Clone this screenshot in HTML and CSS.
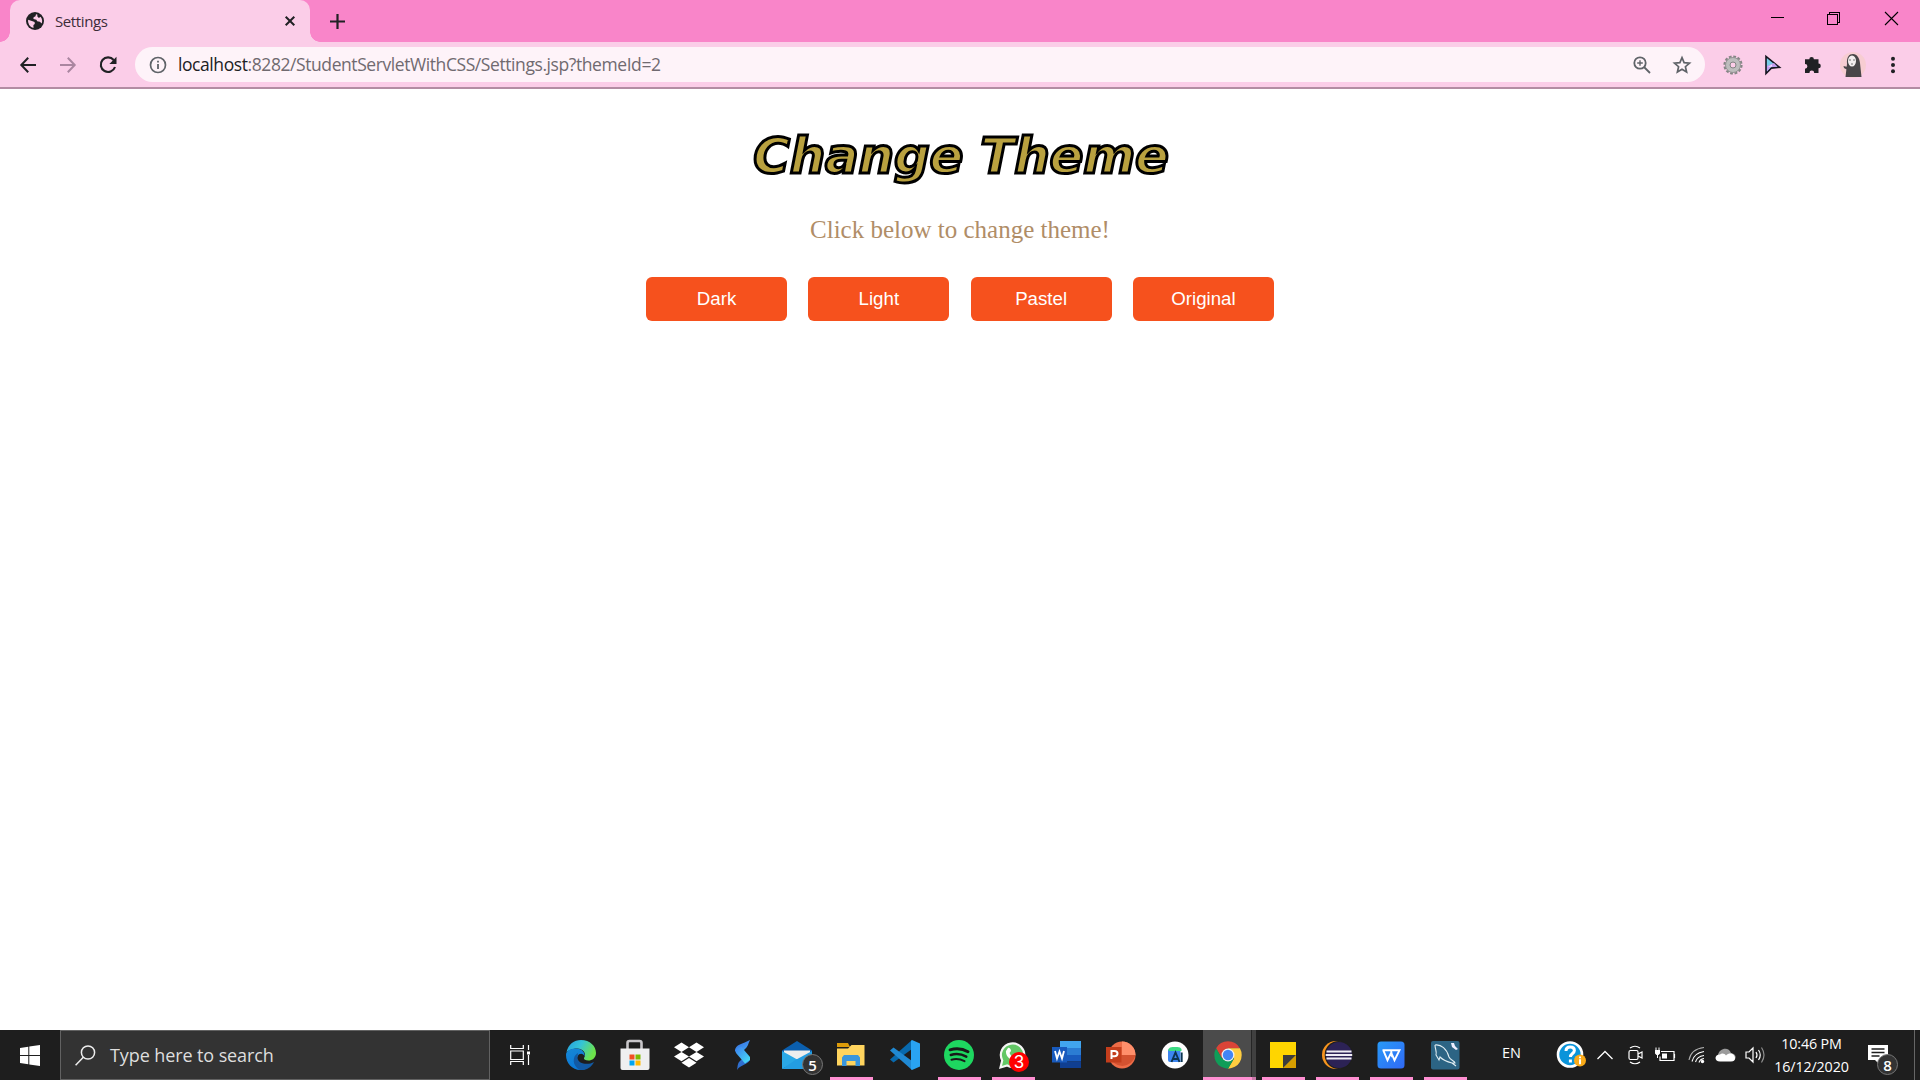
FILE: index.html
```html
<!DOCTYPE html>
<html lang="en">
<head>
<meta charset="utf-8">
<title>Settings</title>
<link rel="stylesheet" href="styles.css">
</head>
<body>
<div class="screen">
  <header class="tabstrip">
    <div class="tab">
      <svg class="favicon" width="18" height="18" viewBox="0 0 18 18"><circle cx="9" cy="9" r="9" fill="#202124"/><path d="M10 2.200 9.500 4.300 7.600 5.200 7.400 7.100 10.400 7.800 11.200 9.300 13.800 9.800 15.700 11.600A7.100 7.100 0 0 0 14.500 4.700L12.900 5.900 11.400 4.600 11.300 2.400ZM2.100 7.700 5.900 9.100 8.600 10.100 8.800 12.100 7.400 13 7.500 15.900A7.100 7.100 0 0 1 2.100 7.700Z" fill="#fbcde8"/></svg>
      <span class="tab-title">Settings</span>
      <svg class="tab-close" width="10" height="10" viewBox="0 0 10 10"><path d="M.7.7l8.600 8.600M9.300.7L.7 9.300" stroke="#202124" stroke-width="2"/></svg>
    </div>
    <svg class="new-tab" width="15" height="15" viewBox="0 0 15 15"><path d="M7.500 0v15M0 7.500h15" stroke="#202124" stroke-width="2.200"/></svg>
    <div class="window-controls">
      <svg width="13" height="13" viewBox="0 0 13 13" shape-rendering="crispEdges"><path d="M0 5.500h13" stroke="#000"/></svg>
      <svg width="13" height="13" viewBox="0 0 13 13" shape-rendering="crispEdges"><path d="M.5 2.500h10v10H.5zM2.500 2.500V.5h10v10h-2" fill="none" stroke="#000"/></svg>
      <svg width="13" height="13" viewBox="0 0 13 13"><path d="M0 0l13 13M13 0L0 13" stroke="#000" stroke-width="1.100"/></svg>
    </div>
  </header>

  <div class="toolbar">
    <div class="nav">
      <svg width="16" height="16" viewBox="0 0 16 16"><path d="M16 8H1.500M8.200.8 1.300 8l6.900 7.200" fill="none" stroke="#202124" stroke-width="2"/></svg>
      <svg width="16" height="16" viewBox="0 0 16 16"><path d="M0 8h14.500M7.800.8 14.700 8l-6.900 7.200" fill="none" stroke="#aa86a0" stroke-width="2"/></svg>
      <svg width="18" height="18" viewBox="0 0 18 18"><path d="M14.700 4A7.300 7.300 0 1 0 16 11" fill="none" stroke="#202124" stroke-width="2.100"/><path d="M17.500.8v7.100h-7.100z" fill="#202124"/></svg>
    </div>
    <div class="omnibox">
      <svg width="18" height="18" viewBox="0 0 18 18"><circle cx="9" cy="9" r="7.500" fill="none" stroke="#5f6368" stroke-width="1.700"/><path d="M8.100 8h1.800v5H8.100zM8.100 4.800h1.800v1.800H8.100z" fill="#5f6368"/></svg>
      <span class="url"><span class="host">localhost</span>:8282/StudentServletWithCSS/Settings.jsp?themeId=2</span>
      <svg class="zoom" width="18" height="18" viewBox="0 0 18 18"><g fill="none" stroke="#5f6368" stroke-width="1.800"><circle cx="7" cy="7" r="5.700"/><path d="M11 11l6 6"/><path d="M7 4.200v5.600M4.200 7h5.600" stroke-width="1.400"/></g></svg>
      <svg class="star" width="18" height="18" viewBox="0 0 18 18"><path d="M9 1.700l2.100 5 5.400.4-4.100 3.600 1.200 5.300L9 13.200 4.400 16l1.200-5.300L1.500 7.100l5.400-.4z" fill="none" stroke="#5f6368" stroke-width="1.700"/></svg>
    </div>
    <div class="extensions">
      <svg width="20" height="20" viewBox="0 0 20 20"><circle cx="10" cy="10" r="8.300" fill="none" stroke="#858585" stroke-width="2.600" stroke-dasharray="2.700 1.646"/><circle cx="10" cy="10" r="5.200" fill="none" stroke="#bdbdbd" stroke-width="5"/><circle cx="10" cy="10" r="7.500" fill="none" stroke="#8b8b8b" stroke-width=".8"/><circle cx="10" cy="10" r="3" fill="none" stroke="#858585"/></svg>
      <svg width="20" height="20" viewBox="0 0 20 20"><path d="M3 1.500v17l5.300-5.400 8.200-.8z" fill="#79cde9" stroke="#15151f" stroke-width="1.600"/><path d="M4 11l7-3 3.500 3.700-6.600.4L4 16.500z" fill="#c69df0"/><path d="M5 12l4-2.500v2z" fill="#f6e6ff"/></svg>
      <svg width="20" height="20" viewBox="0 0 20 20"><path d="M2 4.300H6.300A2.300 2.300 0 1 1 10.900 4.300H15.500V8.600A2.300 2.300 0 1 1 15.500 13.200V18H11.200A2.400 2.400 0 0 0 6.400 18H2V13.700A2.400 2.400 0 0 0 2 8.900z" fill="#202124"/></svg>
      <svg class="avatar" width="26" height="26" viewBox="0 0 26 26"><circle cx="13" cy="13" r="13" fill="#f7cdd2"/><path d="M5.500 25L7 12C6.500 5 9 2 13 2s6.500 4 7 9l1.500 14zM3.500 14l4 1v3l-3.500-2z" fill="#494648"/><ellipse cx="12" cy="9" rx="4" ry="5.500" fill="#f3eeee"/><path d="M10 7v2M14 7v2M11 12h2" stroke="#777"/></svg>
      <svg width="20" height="20" viewBox="0 0 20 20" fill="#202124"><circle cx="10" cy="3.800" r="2"/><circle cx="10" cy="10" r="2"/><circle cx="10" cy="16.200" r="2"/></svg>
    </div>
  </div>

  <main class="page">
    <h1>Change Theme</h1>
    <p>Click below to change theme!</p>
    <div class="themes">
      <button>Dark</button><button>Light</button><button>Pastel</button><button>Original</button>
    </div>
  </main>

  <footer class="taskbar">
    <div class="start"><svg width="20" height="21" viewBox="0 0 20 21"><path d="M0 3l8.300-1.200v8.200H0zM9.300 1.600 20 0v10H9.300zM0 11h8.300v8.200L0 18zM9.300 11H20v10L9.300 19.400z" fill="#fff"/></svg></div>
    <div class="search">
      <svg width="21" height="21" viewBox="0 0 21 21"><g fill="none" stroke="#eee" stroke-width="1.500"><circle cx="13" cy="7.500" r="6.600"/><path d="M8.300 12.300.6 20.200"/></g></svg>
      <span>Type here to search</span>
    </div>
    <div class="taskview"><svg width="21" height="20" viewBox="0 0 21 20"><path d="M.7 0v3.500h12.600V0M.7 20v-3.500h12.600V20M.7 6h12.600v8.500H.7zM18.500 0v5M18.500 10v10" fill="none" stroke="#fff" stroke-width="1.200"/><path d="M17 6.500h3v3h-3z" fill="#fff"/></svg></div>
    <div class="apps">
      <div class="app"><svg width="30" height="30" viewBox="0 0 30 30"><defs><linearGradient id="eg" x1="0" y1="0" x2="1" y2=".4"><stop offset="0" stop-color="#249dde"/><stop offset=".5" stop-color="#35c4d6"/><stop offset="1" stop-color="#6de34a"/></linearGradient><linearGradient id="eb" x1="0" y1="0" x2=".4" y2="1"><stop offset="0" stop-color="#1688d6"/><stop offset="1" stop-color="#0a78d8"/></linearGradient></defs><path d="M.5 12C2.500 4 8 0 15 0c9 0 15 6 15 13 0 5-4 7.500-7.500 7.500-3 0-5-1-4.500-2.500 3-4-.5-9.500-7-9.500C5.500 8.500 2 11 .5 12z" fill="url(#eg)"/><path d="M0 15C0 11 4 8.500 10 8.500c6 0 9.500 4.500 8.500 8-1-3-5-4-7 0C8.500 22 15 27 25 24c-3 5-7.500 6-10.500 6C6 30 0 23 0 15z" fill="url(#eb)"/><path d="M12 13C6 16 6 26 14 30c6 .5 11-2 14-8-6 3.500-16 2-16.500-4z" fill="#125aa4"/></svg></div>
      <div class="app"><svg width="30" height="30" viewBox="0 0 30 30"><path d="M7.500 9V3Q7.500 1 9.500 1h10q2 0 2 2v6" fill="none" stroke="#c8c6c9" stroke-width="2.600"/><path d="M.5 8.500h29v19.500q0 2-2 2h-25q-2 0-2-2z" fill="#efeff0"/><path d="M9.500 14.500h5v5h-5z" fill="#f25022"/><path d="M15.500 14.500h5v5h-5z" fill="#7fba00"/><path d="M9.500 20.500h5v5h-5z" fill="#00a4ef"/><path d="M15.500 20.500h5v5h-5z" fill="#ffb900"/></svg></div>
      <div class="app"><svg width="30" height="30" viewBox="0 0 30 30"><path d="M7.500 2.500l7.500 4.700-7.500 4.700L0 7.200zM22.500 2.500L30 7.200l-7.500 4.700L15 7.200zM7.500 11.900l7.500 4.700-7.500 4.700L0 16.600zM22.500 11.900l7.500 4.700-7.500 4.700-7.500-4.700zM15 18l7.500 4.700L15 27.500l-7.500-4.800z" fill="#fff"/></svg></div>
      <div class="app"><svg width="30" height="30" viewBox="0 0 30 30"><defs><linearGradient id="sg" x1="0" y1="0" x2=".6" y2="1"><stop offset="0" stop-color="#3467e0"/><stop offset="1" stop-color="#43a8f2"/></linearGradient><linearGradient id="sh" x1="0" y1="0" x2="1" y2="1"><stop offset="0" stop-color="#3b7df0"/><stop offset="1" stop-color="#48e4f6"/></linearGradient></defs><path d="M22 0C20 4 20 7 16 10L13 14 7 11C7 4 15 4 22 0z" fill="url(#sg)"/><path d="M9 30c1-4 0-7 4-10l4-3 5 3C19 25 12 25 9 30z" fill="#2f6fd0"/><path d="M7 10 13 6.500 22 17v3l-5 3.500L8 13z" fill="url(#sh)"/></svg></div>
      <div class="app"><svg width="30" height="30" viewBox="0 0 30 30"><path d="M0 10.500 15 1l15 9.500V22H0z" fill="#0b5fae"/><path d="M2 10.500h26v9H2z" fill="#eee"/><path d="M0 11l17 9.500L0 29z" fill="#2aa8e6"/><path d="M30 11v18H0l13-8.700z" fill="#239de2"/></svg><span class="badge dark">5</span></div>
      <div class="app open"><svg width="30" height="30" viewBox="0 0 30 30"><path d="M1 3h11l2 4H1z" fill="#dc9b09"/><path d="M1 8.500h11L15.500 5H28.500v20.500H1z" fill="#ffd45e"/><path d="M6 26V17.500L8 15h14l2 2.500V26h-4.500v-5h-9v5z" fill="#3a96dc"/></svg></div>
      <div class="app"><svg width="30" height="30" viewBox="0 0 30 30"><path d="M22 0v9L3.500 22.500 0 19.500z" fill="#0869ad"/><path d="M22 30v-9L3.500 7.500 0 10.500z" fill="#2089d3"/><path d="M22 0l8 3.500v23L22 30l-1-1V1z" fill="#29a3f2"/></svg></div>
      <div class="app open"><svg width="30" height="30" viewBox="0 0 30 30"><circle cx="15" cy="15" r="15" fill="#1ed760"/><g fill="none" stroke="#191919" stroke-linecap="round"><path d="M6 9.800c6-1.700 13-1 18 2" stroke-width="2.900"/><path d="M6.800 15c5-1.500 11-.8 15.500 1.700" stroke-width="2.500"/><path d="M7.500 19.700c4.500-1.200 9-.6 13 1.500" stroke-width="2"/></g></svg></div>
      <div class="app open"><svg width="30" height="30" viewBox="0 0 30 30"><path d="M2.500 27.500l1.700-7a11.700 11.700 0 1 1 5 5z" fill="#63c766" stroke="#f5f5f5" stroke-width="2.200"/><path d="M10 8c2-1 3 2 3 3l-1.500 2c1.500 3 3 4 5 5l2-2c2 1 3 2 2.500 3-3 5-14-1-13-8z" fill="#fff"/></svg><span class="badge red">3</span></div>
      <div class="app"><svg width="30" height="30" viewBox="0 0 30 30"><path d="M8 1h21v7H8z" fill="#41a5ee"/><path d="M8 8h21v7H8z" fill="#2b7cd3"/><path d="M8 15h21v6.500H8z" fill="#185abd"/><path d="M8 21.500h21V28H8z" fill="#103f91"/><path d="M0 7h15v15.500H0z" fill="#185abd"/><path d="M3 11l2 7.500 2.500-7 2.500 7 2-7.500" fill="none" stroke="#fff" stroke-width="1.800"/></svg></div>
      <div class="app"><svg width="30" height="30" viewBox="0 0 30 30"><circle cx="16" cy="15" r="13.500" fill="#ed6c47"/><path d="M16 1.500A13.500 13.500 0 0 1 29.500 15H16z" fill="#ff8f6b"/><path d="M3 15h26.500a13.500 13.500 0 0 1-26.500 0z" fill="#d35230"/><path d="M0 7h15.500v15.500H0z" fill="#c43e1c"/><path d="M5.500 19v-8h3q3 0 3 2.600t-3 2.600h-3" fill="none" stroke="#fff" stroke-width="2"/></svg></div>
      <div class="app"><svg width="30" height="30" viewBox="0 0 30 30"><circle cx="15" cy="15" r="13.500" fill="#fff"/><path d="M8 9.500h12.500V22H10q-2 0-2-2z" fill="#3d86f0"/><path d="M8.500 11V9q1-2 4-2h5q3 0 4 2v2z" fill="#3ddc84"/><path d="M11.500 22l4-9.500 4 9.500M13 19h5M21.700 12.500V22" fill="none" stroke="#0d3550" stroke-width="1.900"/></svg></div>
      <div class="app open active"><svg width="30" height="30" viewBox="0 0 30 30"><path d="M3.100 8.200A13.700 13.700 0 0 1 26.900 8.200H15L9 18.500z" fill="#db4437"/><path d="M26.900 8.200A13.700 13.700 0 0 1 15 28.700L21 18.400 15 8.200z" fill="#ffcd40"/><path d="M3.100 8.200A13.700 13.700 0 0 0 15 28.700l6-10.300H9z" fill="#0f9d58"/><circle cx="15" cy="15" r="6.500" fill="#f1f1f1"/><circle cx="15" cy="15" r="5.200" fill="#4285f4"/></svg></div>
      <div class="app open"><svg width="30" height="30" viewBox="0 0 30 30"><path d="M2 2h26v26H2z" fill="#ffd500"/><path d="M28 15v13H15z" fill="#d79e00"/><path d="M15 15h13L15 28z" fill="#3c3c3c"/></svg></div>
      <div class="app open"><svg width="30" height="30" viewBox="0 0 30 30"><circle cx="14" cy="15" r="14" fill="#f7941e"/><circle cx="16.700" cy="15" r="14" fill="#1e1e1e"/><circle cx="17" cy="15" r="13" fill="#2c2255"/><path d="M4.500 11.500h25M3.700 15h26.500M4.500 18.500h25" stroke="#f0eef5" stroke-width="1.800"/></svg></div>
      <div class="app open"><svg width="30" height="30" viewBox="0 0 30 30"><defs><linearGradient id="wg" x1="0" y1="0" x2="1" y2="1"><stop offset="0" stop-color="#279af8"/><stop offset="1" stop-color="#3169f5"/></linearGradient></defs><rect x="1.500" y="1.500" width="27" height="27" rx="3.500" fill="url(#wg)"/><path d="M6.500 10.200H15L16.200 17M7.200 10.200l4.300 10 3.700-7.500 3.300 7.500 5-10h-8" fill="none" stroke="#fff" stroke-width="1.900"/></svg></div>
      <div class="app open"><svg width="30" height="30" viewBox="0 0 30 30"><rect x="1" y="1" width="28.500" height="28.500" rx="2" fill="#2c6484"/><path d="M5 5c6-1 12 4 14 12 1 3 6 4 6 6h-3l4 3M5 5c0 4 2 6 1 10l3 5 1-3c4 4 8 5 12 6" fill="none" stroke="#e0edf2" stroke-width="1.100"/><path d="M21 3l1 4 4 3 2-1-3-3-1-3z" fill="#eef"/></svg></div>
    </div>
    <div class="lang">EN</div>
    <div class="tray">
      <svg class="help" width="30" height="28" viewBox="0 0 30 28"><circle cx="13" cy="13.500" r="12" fill="#0a94da" stroke="#fff" stroke-width="2.600"/><path d="M9 10q0-4 4.200-4t4.200 3.500c0 3-4 3-4 6.500M13.400 18.500v3" fill="none" stroke="#fff" stroke-width="3"/><circle cx="23" cy="19.500" r="6" fill="#f9aa19"/><path d="M23 15.500v1.800M23 18.300v5" stroke="#fff" stroke-width="2"/></svg>
      <svg class="chevron" width="16" height="10" viewBox="0 0 16 10"><path d="M.5 9 8 1.500 15.500 9" fill="none" stroke="#fff" stroke-width="1.300"/></svg>
      <svg class="meet" width="16" height="20" viewBox="0 0 16 20"><g fill="none" stroke="#fff" stroke-width="1.200"><rect x="1" y="5.500" width="9" height="9" rx="1.500"/><path d="M10 9l4-2v6l-4-2M2 3q5-3.500 10 0M2 17q5 3.500 10 0"/></g></svg>
      <svg class="battery" width="21" height="16" viewBox="0 0 21 16"><path d="M6 4.500h13v9H5v-4M19.500 7v4" fill="none" stroke="#fff" stroke-width="1.200"/><path d="M7 6.500h5v5H7zM0 3h5v3.500L3.500 8h-2L0 6.500z" fill="#fff"/><path d="M1 3V.5M4 3V.5M2.500 8v3" stroke="#fff"/></svg>
      <svg class="wifi" width="18" height="18" viewBox="0 0 18 18"><g fill="none" stroke="#fff" stroke-width="1.100"><path d="M1 14Q3 3 16 1.500" opacity=".65"/><path d="M4 15.500Q6 7 16 5.500M7.500 16Q9 10.500 16 9.500M11 16.500q1-3.500 5-4"/></g><circle cx="14.500" cy="15.500" r="1.700" fill="#fff"/></svg>
      <svg class="cloud" width="21" height="14" viewBox="0 0 21 14"><path d="M3 7c1-7 11-9 13-2 7 1 5 8 1 8H5z" fill="#9b9b9b"/><path d="M5 13.500c-6 0-6-7 0-7 2-2 5-1 6 1 4-4 9-1 9 2.500 0 2-1 3.500-4 3.500z" fill="#fff"/></svg>
      <svg class="speaker" width="21" height="18" viewBox="0 0 21 18"><g fill="none" stroke="#fff" stroke-width="1.200"><path d="M1 6h3l4-4v14l-4-4H1zM11 6q2 3 0 6M13.500 4q3.500 5 0 10"/><path d="M16.500 1.500q5 7.500 0 15" opacity=".5"/></g></svg>
    </div>
    <div class="clock"><span>10:46 PM</span><span class="date">16/12/2020</span></div>
    <div class="notice"><svg width="20" height="19" viewBox="0 0 20 19"><path d="M0 0h20v15h-9v4l-4-4H0z" fill="#fff"/><path d="M3.500 4h13M3.500 7.500h13M3.500 11h8" stroke="#1e1e1e" stroke-width="1.300"/></svg><span class="badge dark">8</span></div>
    <div class="show-desktop"></div>
  </footer>
</div>
</body>
</html>
```
FILE: styles.css
```css
* { box-sizing: border-box; }
body { margin: 0; background: #fff; overflow: hidden; }
svg { display: block; flex: none; overflow: visible; }
.screen { width: 1920px; height: 1080px; display: flex; flex-direction: column; font-family: "Open Sans", "Noto Sans", sans-serif; }

/* Tab strip */
.tabstrip { height: 42px; flex: none; display: flex; align-items: center; background: #f985c9; padding-left: 10px; }
.tab { position: relative; width: 300px; height: 42px; display: flex; align-items: center; padding: 0 15px 0 16px; background: #fbcde8; border-radius: 10px 10px 0 0; }
.tab::before, .tab::after { content: ""; position: absolute; bottom: 0; width: 10px; height: 10px; }
.tab::before { left: -10px; background: radial-gradient(circle at 0 0, transparent 9.500px, #fbcde8 10px); }
.tab::after { right: -10px; background: radial-gradient(circle at 100% 0, transparent 9.500px, #fbcde8 10px); }
.tab-title { margin-left: 11px; padding-bottom: 1px; font-size: 15px; line-height: 20px; letter-spacing: -.4px; color: #3c2c38; white-space: nowrap; }
.tab-close { margin-left: auto; }
.new-tab { margin-left: 20px; }
.window-controls { margin-left: auto; display: flex; gap: 43px; padding: 0 22px 5px 0; }
.window-controls svg:last-child { margin-left: 2px; }

/* Address bar */
.toolbar { height: 47px; flex: none; display: flex; align-items: center; padding: 0 17px 0 20px; background: #fbcde8; border-bottom: 2px solid #b38ca3; }
.nav { width: 115px; display: flex; align-items: center; gap: 23.500px; }
.omnibox { width: 1570px; height: 35px; display: flex; align-items: center; padding: 0 14px; border-radius: 18px; background: #fef3f9; }
.url { margin-left: 11px; padding-bottom: 1px; font-size: 17.500px; line-height: 24px; letter-spacing: -.42px; color: #706a70; white-space: nowrap; }
.host { color: #202124; }
.zoom { margin-left: auto; }
.star { margin-left: 22px; }
.extensions { flex: 1; display: flex; align-items: center; justify-content: space-between; padding-left: 17.500px; }
.avatar { margin: 0 -3px; }

/* Page */
.page { flex: 1; display: flex; flex-direction: column; align-items: center; padding-top: 36px; background: #fff; }
h1 { margin: 0; padding-left: 2px; font: italic bold 50px/62px "DejaVu Sans", sans-serif; letter-spacing: -.25px; color: #b9a13f; -webkit-text-stroke: 3px #000; white-space: nowrap; }
p { margin: 28px 0 0; font: 25px/30px "Liberation Serif", serif; color: #b08d67; }
.themes { display: flex; gap: 21.300px; margin-top: 32px; }
.themes button { width: 141px; height: 44px; padding: 0; border: 0; border-radius: 6px; background: #f6511d; color: #fff; font: 18.700px "Liberation Sans", sans-serif; }

/* Taskbar */
.taskbar { height: 50px; flex: none; display: flex; align-items: stretch; background: #1e1e1e; color: #fff; }
.start { width: 60px; display: flex; align-items: center; justify-content: center; }
.search { width: 430px; display: flex; align-items: center; gap: 14px; padding-left: 14px; border: 1px solid #626262; background: #333; color: #dedede; font-size: 18px; white-space: nowrap; letter-spacing: -.1px; }
.taskview { width: 64px; display: flex; align-items: center; padding-left: 20px; }
.apps { display: flex; }
.app { position: relative; width: 54px; display: flex; align-items: center; justify-content: center; }
.app.open::after { content: ""; position: absolute; bottom: 0; left: 6px; width: 43px; height: 3px; background: #ff8fd2; }
.app.active { padding-right: 2px; background: linear-gradient(90deg, transparent 1px, #4b4b4b 1px, #4b4b4b 49px, #252525 49px, #252525 50px, #404040 50px); }
.app.active::after { left: 1px; width: 53px; background: linear-gradient(90deg, #ff8fd2 49px, #c978a8 49px); }
.badge { position: absolute; display: flex; align-items: center; justify-content: center; border-radius: 50%; color: #fff; }
.badge.dark { width: 21px; height: 21px; left: 32px; top: 24px; border: 1.500px solid #777; background: #333; font-size: 15px; font-weight: 600; }
.badge.red { width: 20px; height: 20px; left: 23px; top: 22px; background: #f00; font: 18px "Liberation Sans", sans-serif; }
.lang { width: 80px; padding: 13px 0 0 30px; font-size: 14.500px; line-height: 19px; }
.tray { width: 217px; display: flex; align-items: center; }
.help { margin-left: 5px; }
.chevron { margin-left: 10px; }
.meet { margin-left: 15px; }
.battery { margin-left: 11px; }
.wifi { margin-left: 12px; }
.cloud { margin-left: 9px; }
.speaker { margin-left: 9px; }
.clock { width: 85px; display: flex; flex-direction: column; align-items: center; padding-top: 3px; font-size: 14.300px; line-height: 22.500px; white-space: nowrap; letter-spacing: -.15px; }
.notice { position: relative; width: 60px; padding: 15px 0 0 14px; }
.notice .badge { left: 23px; }
.show-desktop { flex: 1; border-left: 1px solid #666; }
```
